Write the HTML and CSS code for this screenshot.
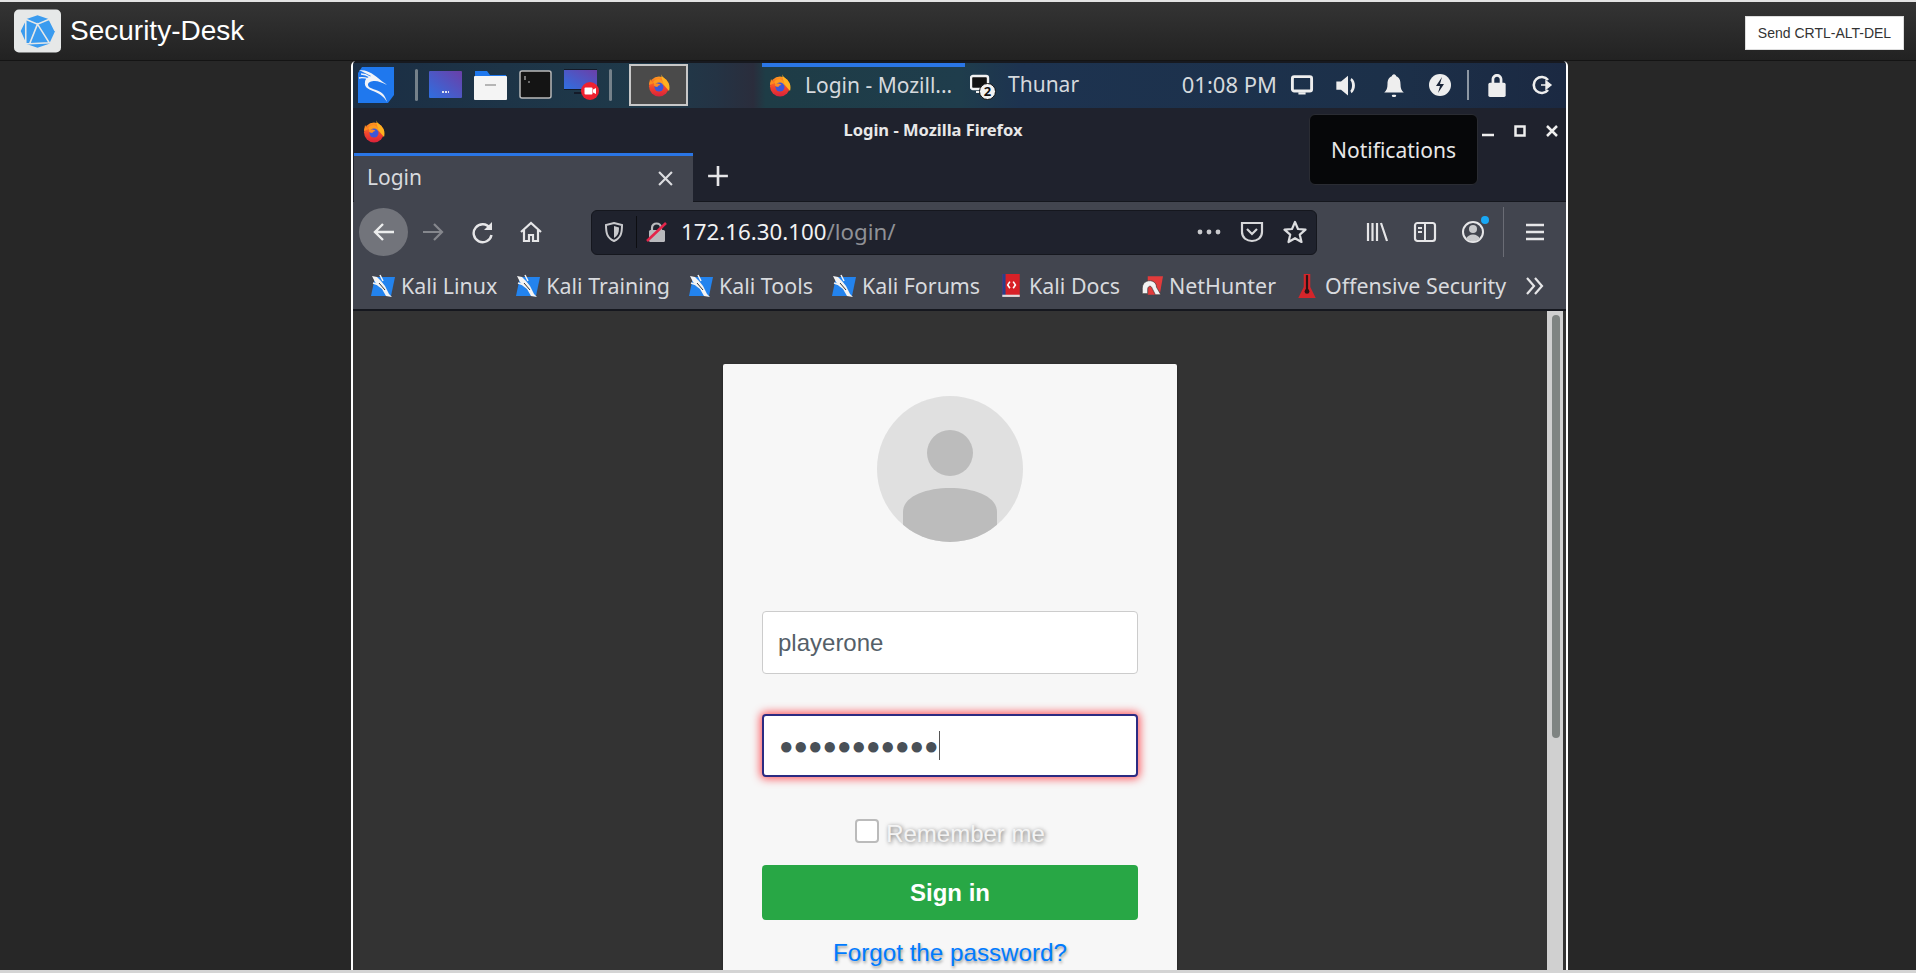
FILE: index.html
```html
<!DOCTYPE html>
<html lang="en">

<head>
    <meta charset="UTF-8">
    <title>Security-Desk</title>
    <link rel="stylesheet" href="styles.css">
</head>

<body>
    <svg class="defs" width="0" height="0">
        <defs>
            <linearGradient id="ffRing" x1="0" y1="0" x2="0" y2="1">
                <stop offset="0" stop-color="#ff9a1f"/>
                <stop offset="0.55" stop-color="#f2452d"/>
                <stop offset="1" stop-color="#d9213a"/>
            </linearGradient>
            <linearGradient id="screenFill" x1="0" y1="1" x2="1" y2="0">
                <stop offset="0" stop-color="#2f6fe0"/>
                <stop offset="1" stop-color="#6b3fa8"/>
            </linearGradient>
            <symbol id="firefox" viewBox="0 0 24 24">
                <circle cx="12" cy="13.5" r="10" fill="url(#ffRing)"/>
                <path d="M14 1c.5 3 5 4.500 7.500 9 1.500 3 1 6.500 .5 8l-6-7z" fill="#ffb21f"/>
                <path d="M3 6c0 2-1 3-1 6l5-2c-2-1-3-2-4-4z" fill="#ff8a1f"/>
                <path d="M6 9c2-3 6-4 8-2 2 1 3 3 2 6l-8-1z" fill="#ff9a1f"/>
                <circle cx="12" cy="14" r="4.500" fill="#3c56d8"/>
                <path d="M6.500 12c2-2 5-2 7 0-2 0-3 1-3 2-2 0-3-1-4-2z" fill="#ff8a1f"/>
            </symbol>
            <symbol id="kali-mark" viewBox="0 0 24 24">
                <path d="M4 3h20l-4 19H0z" fill="#2383ee"/>
                <path d="M1 2l5 1 4 4 4 5 4 8 3 3-6-1-4-7-4-3-3-4z" fill="#f4f4f4"/>
                <path d="M2 9l6 2M9 1l3 6" stroke="#f4f4f4" stroke-width="1.500"/>
                <path d="M8 9l6 7" stroke="#333" stroke-width="1"/>
            </symbol>
        </defs>
    </svg>

    <div class="page">
        <header class="topbar">
            <div class="brand">
                <svg class="brand-logo" viewBox="0 0 48 44">
                    <rect width="48" height="44" rx="5" fill="#e6e8e8"/>
                    <path d="M24 6l12 4 6 12-6 13-12 4-12-4-6-13 6-12z" fill="#3a9bef"/>
                    <path d="M12 10l12 5 12-5M24 15l-8 20 20-1-12-19zM6 22l6-12v25z M42 22l-6-12M16 35l-4 0" fill="none" stroke="#e6e8e8" stroke-width="1.600"/>
                </svg>
                <span class="brand-name">Security-Desk</span>
            </div>
            <button class="send-btn">Send CRTL-ALT-DEL</button>
        </header>

        <div class="stage">
            <div class="desktop">
                <div class="panel">
                    <svg class="kali-logo" viewBox="0 0 36 36">
                        <path d="M4 0h32v28l-6 8H0V6z" fill="#1f78ee"/>
                        <path d="M1 3c8 0 13 3 19 8 3 3 7 5 9 7-4-2-9-4-12-4-4 0-7 1-7 4 0 4 10 4 15 9 2 2 3 5 4 8-3-6-9-9-14-11-5-2-9-4-8-9 0-3 3-5 6-6C9 7 5 5 1 3z" fill="#f2f4f8"/>
                        <path d="M1 11c4-1 7 0 10 1M3 7c3 0 6 1 9 3" stroke="#f2f4f8" stroke-width="1.300" fill="none"/>
                    </svg>
                    <span class="panel-sep"></span>
                    <div class="launchers">
                        <svg class="launcher" viewBox="0 0 33 30"><rect width="33" height="27" y="1" rx="1" fill="url(#screenFill)"/><path d="M13 22h7" stroke="#dfe3f0" stroke-width="2" stroke-dasharray="2 1"/></svg>
                        <svg class="launcher" viewBox="0 0 33 30"><path d="M1 1h12l3 4h16v6H1z" fill="#1f78ee"/><rect x="0" y="6" width="33" height="24" rx="1" fill="#f4f4f4"/><path d="M11 15h11" stroke="#b5b5b5" stroke-width="2"/></svg>
                        <svg class="launcher" viewBox="0 0 33 30"><rect x="1" y="1" width="31" height="27" rx="2" fill="#141414" stroke="#b9b9b9" stroke-width="1.500"/><path d="M6 6v4M9 12h2" stroke="#bbb" stroke-width="1.200"/></svg>
                        <svg class="launcher launcher-rec" viewBox="0 0 36 32"><rect y="0" width="33" height="21" fill="#141a28"/><rect y="1" width="33" height="19" fill="url(#screenFill)"/><path d="M10 24h14" stroke="#141a28" stroke-width="2"/><circle cx="26" cy="22" r="9" fill="#ee2130"/><rect x="20.500" y="18.500" width="8" height="7" rx="1" fill="#fff"/><path d="M29 20.500l3-1.500v6l-3-1.500z" fill="#fff"/></svg>
                    </div>
                    <span class="panel-sep panel-sep-b"></span>
                    <div class="win-active"><svg class="icon-24"><use href="#firefox"/></svg></div>
                    <div class="task task-current">
                        <svg class="icon-24"><use href="#firefox"/></svg>
                        <span class="task-label">Login - Mozill...</span>
                    </div>
                    <div class="task task-thunar">
                        <span class="thunar-icon">
                            <svg class="icon-20" viewBox="0 0 20 20"><rect x="1" y="2" width="17" height="13" rx="2" fill="#111" stroke="#f0f0f0" stroke-width="2.400"/><path d="M6 18h8" stroke="#f0f0f0" stroke-width="2"/></svg>
                            <span class="thunar-count">2</span>
                        </span>
                        <span class="task-label">Thunar</span>
                    </div>
                    <div class="tray">
                        <span class="clock">01:08 PM</span>
                        <span class="tray-item"><svg class="icon-24" viewBox="0 0 20 20"><rect x="2" y="3" width="16" height="12" rx="1.500" fill="none" stroke="#eee" stroke-width="2.400"/><path d="M7 17h6" stroke="#eee" stroke-width="2"/></svg></span>
                        <span class="tray-item"><svg class="icon-28" viewBox="0 0 24 24"><path d="M2 9h4l6-5v17l-6-5H2z" fill="#eee"/><path d="M15 6c4 3 4 10 0 13l-1-2c2-2 2-7 0-9z" fill="#eee"/></svg></span>
                        <span class="tray-item"><svg class="icon-26" viewBox="0 0 24 24"><path d="M12 2c1 0 2 1 2 2 3 1 4 4 4 7 0 4 1 6 3 8H3c2-2 3-4 3-8 0-3 1-6 4-7 0-1 1-2 2-2z" fill="#eee"/><rect x="10" y="21" width="4" height="2" rx="1" fill="#eee"/></svg></span>
                        <span class="tray-item"><svg class="icon-24" viewBox="0 0 24 24"><circle cx="12" cy="12" r="11" fill="#eee"/><path d="M14 4l-6 9h4l-2 7 6-9h-4z" fill="#1c2638"/></svg></span>
                        <span class="tray-sep"></span>
                        <span class="tray-item"><svg class="icon-26" viewBox="0 0 24 24"><path d="M7 11V7c0-7 10-7 10 0v4h-2.500V7c0-3.500-5-3.500-5 0v4z" fill="#eee"/><rect x="4" y="10" width="16" height="13" rx="1.500" fill="#eee"/></svg></span>
                        <span class="tray-item"><svg class="icon-24" viewBox="0 0 24 24"><path d="M17 7a8 8 0 1 0 0 10" fill="none" stroke="#eee" stroke-width="2.600"/><path d="M10 12h8M15 8l5 4-5 4z" fill="#eee" stroke="#eee" stroke-width="1.400"/></svg></span>
                    </div>
                </div>

                <div class="titlebar">
                    <svg class="icon-24"><use href="#firefox"/></svg>
                    <span class="window-title">Login - Mozilla Firefox</span>
                    <div class="window-controls">
                        <span class="wc"><svg width="14" height="14" viewBox="0 0 14 14"><path d="M1 11h12" stroke="#eee" stroke-width="2.500"/></svg></span>
                        <span class="wc"><svg width="14" height="14" viewBox="0 0 14 14"><rect x="2.500" y="2.500" width="9" height="9" fill="none" stroke="#eee" stroke-width="2.500"/></svg></span>
                        <span class="wc"><svg width="14" height="14" viewBox="0 0 14 14"><path d="M2 2l10 10M12 2L2 12" stroke="#eee" stroke-width="2.500"/></svg></span>
                    </div>
                </div>

                <div class="tabstrip">
                    <div class="tab">
                        <span class="tab-label">Login</span>
                        <svg class="tab-close" viewBox="0 0 14 14"><path d="M1 1l12 12M13 1L1 13" stroke="#dcdde0" stroke-width="2"/></svg>
                    </div>
                    <svg class="tab-new" viewBox="0 0 20 20"><path d="M10 1v18M1 10h18" stroke="#e6e6e8" stroke-width="2.400"/></svg>
                </div>

                <div class="toolbar">
                    <span class="nav-btn nav-back"><svg class="icon-24" viewBox="0 0 24 24"><path d="M22 12H3M11 4l-8 8 8 8" fill="none" stroke="#eceded" stroke-width="2.400"/></svg></span>
                    <span class="nav-btn"><svg class="icon-24" viewBox="0 0 24 24"><path d="M2 12h19M13 4l8 8-8 8" fill="none" stroke="#85878d" stroke-width="2.200"/></svg></span>
                    <span class="nav-btn"><svg class="icon-24 reload-icon" viewBox="0 0 24 24"><path d="M19 8a9 9 0 1 0 1.500 7" fill="none" stroke="#e6e6e8" stroke-width="2.400"/><path d="M21 2v8h-8z" fill="#e6e6e8"/></svg></span>
                    <span class="nav-btn"><svg class="icon-24" viewBox="0 0 24 24"><path d="M2 12L12 3l10 9M5 10v11h5v-6h4v6h5V10" fill="none" stroke="#e6e6e8" stroke-width="2.200"/></svg></span>
                    <div class="urlbar">
                        <span class="url-shield"><svg class="icon-20" viewBox="0 0 20 20"><path d="M10 1l8 2c0 8-1 13-8 16C3 16 2 11 2 3z" fill="none" stroke="#c8c9cc" stroke-width="2"/><path d="M10 4l5 1.500c0 5-1 8-5 10.500z" fill="#c8c9cc"/></svg></span>
                        <span class="url-sep"></span>
                        <span class="url-lock"><svg class="icon-22" viewBox="0 0 22 22"><path d="M6 10V7c0-6 9-6 9 0v3" fill="none" stroke="#b9babd" stroke-width="2.200"/><rect x="3" y="9" width="16" height="12" rx="1.500" fill="#b9babd"/><path d="M1 20L20 2" stroke="#e4254a" stroke-width="2.600"/></svg></span>
                        <span class="url-text"><span class="url-host">172.16.30.100</span>/login/</span>
                        <div class="url-actions">
                            <span class="url-action"><svg width="24" height="6" viewBox="0 0 24 6"><circle cx="3" cy="3" r="2.400" fill="#c8c9cc"/><circle cx="12" cy="3" r="2.400" fill="#c8c9cc"/><circle cx="21" cy="3" r="2.400" fill="#c8c9cc"/></svg></span>
                            <span class="url-action"><svg class="icon-24" viewBox="0 0 24 24"><path d="M2 3h20v9c0 12-20 12-20 0z" fill="none" stroke="#d6d7d9" stroke-width="2.200"/><path d="M7 9l5 5 5-5" fill="none" stroke="#d6d7d9" stroke-width="2.200"/></svg></span>
                            <span class="url-action"><svg class="icon-24" viewBox="0 0 24 24"><path d="M12 2l3 7 7.500 .7-5.700 5 1.700 7.300-6.500-3.800L5.500 22l1.700-7.300-5.700-5L9 9z" fill="none" stroke="#dcdde0" stroke-width="2.200" stroke-linejoin="round"/></svg></span>
                        </div>
                    </div>
                    <div class="tools">
                        <span class="nav-tool"><svg class="icon-24" viewBox="0 0 24 24"><path d="M3 3v18M7.500 3v18M12 3v18M16 3l6 18" stroke="#e6e6e8" stroke-width="2.200"/></svg></span>
                        <span class="nav-tool"><svg class="icon-24" viewBox="0 0 24 24"><rect x="2" y="3" width="20" height="18" rx="2.500" fill="none" stroke="#e6e6e8" stroke-width="2.200"/><path d="M12 3v18M5 8h4M5 12h4" stroke="#e6e6e8" stroke-width="2"/></svg></span>
                        <span class="nav-tool account">
                            <svg class="icon-24" viewBox="0 0 24 24"><circle cx="12" cy="12" r="10" fill="none" stroke="#e6e6e8" stroke-width="2"/><circle cx="12" cy="9" r="4" fill="#c8c9cc"/><path d="M5 19c2-6 12-6 14 0-4 3-10 3-14 0z" fill="#c8c9cc"/></svg>
                            <span class="account-dot"></span>
                        </span>
                        <span class="tool-sep"></span>
                        <span class="nav-menu"><svg class="icon-24" viewBox="0 0 24 24"><path d="M3 5h18M3 12h18M3 19h18" stroke="#e6e6e8" stroke-width="2.400"/></svg></span>
                    </div>
                </div>

                <div class="bookmarks">
                    <span class="bm"><svg class="icon-24"><use href="#kali-mark"/></svg>Kali Linux</span>
                    <span class="bm"><svg class="icon-24"><use href="#kali-mark"/></svg>Kali Training</span>
                    <span class="bm"><svg class="icon-24"><use href="#kali-mark"/></svg>Kali Tools</span>
                    <span class="bm"><svg class="icon-24"><use href="#kali-mark"/></svg>Kali Forums</span>
                    <span class="bm"><svg class="icon-24" viewBox="0 0 22 22"><rect x="3" y="0" width="16" height="21" fill="#d82027"/><rect x="3" y="0" width="3" height="21" fill="#27408b"/><rect x="3" y="19" width="16" height="2" fill="#ddd"/><path d="M10 7l-2 3 2 3M13 7l2 3-2 3" fill="none" stroke="#fff" stroke-width="1.500"/></svg>Kali Docs</span>
                    <span class="bm"><svg class="icon-24" viewBox="0 0 22 22"><path d="M8 2h14l-3 17H8z" fill="#e23b3b"/><path d="M3 18V13c0-9 13-9 13-1l4 7h-5l-3-6c-1-3-4-2-4 1v4z" fill="#f2f2f2" stroke="#333" stroke-width=".6"/></svg>NetHunter</span>
                    <span class="bm"><svg class="icon-24" viewBox="0 0 22 22"><path d="M8 0h6v12l5 10H3l5-10z" fill="#d4252a"/><path d="M11 1v14" stroke="#2a1414" stroke-width="2"/><circle cx="11" cy="16" r="2.200" fill="#2a1414"/></svg>Offensive Security</span>
                    <svg class="bm-more" viewBox="0 0 20 20"><path d="M2 2l7 8-7 8M10 2l7 8-7 8" fill="none" stroke="#e6e6e8" stroke-width="2.200"/></svg>
                </div>

                <div class="viewport">
                    <main class="content">
                        <div class="login-card">
                            <svg class="avatar" viewBox="0 0 146 146">
                                <defs><clipPath id="avatarClip"><circle cx="73" cy="73" r="73"/></clipPath></defs>
                                <circle cx="73" cy="73" r="73" fill="#e0e0e0"/>
                                <circle cx="73" cy="57" r="23" fill="#bcbcbc"/>
                                <g clip-path="url(#avatarClip)">
                                    <path d="M26 135V116c0-32 94-32 94 0V135L110 148H36z" fill="#bcbcbc"/>
                                </g>
                            </svg>
                            <div class="field field-user">playerone</div>
                            <div class="field field-pass"><span class="pass-dots">●●●●●●●●●●●</span><span class="caret"></span></div>
                            <label class="remember">
                                <input class="remember-box" type="checkbox">
                                <span class="remember-text">Remember me</span>
                            </label>
                            <button class="signin">Sign in</button>
                            <a class="forgot" href="#">Forgot the password?</a>
                        </div>
                    </main>
                    <div class="scrolltrack"><span class="scrollthumb"></span></div>
                </div>

                <div class="tooltip">Notifications</div>
            </div>
        </div>

        <div class="bottom-strip"></div>
    </div>
</body>

</html>
```
FILE: styles.css
```css
* {
    margin: 0;
    padding: 0;
    box-sizing: border-box;
}

html,
body {
    height: 100%;
    overflow: hidden;
}

body {
    background-color: #272727;
    font-family: "Liberation Sans", Arial, sans-serif;
}

.defs {
    position: absolute;
}

.page {
    height: 973px;
    display: flex;
    flex-direction: column;
}

svg {
    display: block;
    flex: none;
}

.icon-20 {
    width: 20px;
    height: 20px;
}

.icon-22 {
    width: 22px;
    height: 22px;
}

.icon-24 {
    width: 24px;
    height: 24px;
}

.icon-26 {
    width: 26px;
    height: 26px;
}

.icon-28 {
    width: 28px;
    height: 28px;
}

/* top bar of the site */
.topbar {
    height: 61px;
    flex: none;
    display: flex;
    align-items: center;
    justify-content: space-between;
    padding: 0 12px 0 14px;
    background: linear-gradient(#343434, #222222);
    border-top: 2px solid #e4e4e4;
    border-bottom: 1px solid #141414;
}

.brand {
    display: flex;
    align-items: center;
    gap: 9px;
}

.brand-logo {
    width: 47px;
    height: 44px;
}

.brand-name {
    color: #ffffff;
    font-size: 28px;
}

.send-btn {
    width: 159px;
    height: 34px;
    margin-top: 3px;
    background-color: #ffffff;
    border: 1px solid #dddddd;
    color: #333333;
    font-family: "Liberation Sans", Arial, sans-serif;
    font-size: 14px;
}

/* remote desktop */
.stage {
    flex: 1;
    min-height: 0;
    padding-left: 351px;
}

.desktop {
    position: relative;
    width: 1217px;
    height: 909px;
    display: flex;
    flex-direction: column;
    overflow: hidden;
    background-color: #1f222d;
    border-left: 2px solid #ffffff;
    border-right: 2px solid #ffffff;
    border-radius: 5px 5px 0 0;
    font-family: "Noto Sans", sans-serif;
}

.panel {
    height: 47px;
    flex: none;
    display: flex;
    align-items: center;
    padding-top: 1px;
    color: #d5d9dd;
    font-size: 21px;
    background: linear-gradient(90deg, #1b2e44 0, #1f3a4a 25%, #243344 30%, #2a2d3c 33%, #1e3c46 34%, #1f3d4c 50%, #1d3350 55%, #1c3049 85%, #1b2942 100%);
    box-shadow: inset 0 2px 0 #17191f;
}

.kali-logo {
    width: 36px;
    height: 36px;
    margin-left: 5px;
}

.panel-sep {
    width: 3px;
    height: 32px;
    margin-left: 21px;
    background-color: #75818a;
    border-radius: 2px;
}

.panel-sep-b {
    margin-left: 9px;
}

.launchers {
    display: flex;
    align-items: center;
    gap: 12px;
    margin-left: 11px;
}

.launcher {
    width: 33px;
    height: 30px;
}

.launcher-rec {
    width: 36px;
    height: 32px;
}

.win-active {
    width: 59px;
    height: 42px;
    margin-left: 17px;
    display: flex;
    align-items: center;
    justify-content: center;
    background-color: #4a4a4a;
    border: 2px solid #c8c8c8;
}

.task {
    height: 45px;
    display: flex;
    align-items: center;
    padding-bottom: 5px;
}

.task-current {
    width: 203px;
    margin-left: 74px;
    gap: 13px;
    padding-left: 6px;
    border-top: 4px solid #2a76e6;
}

.task-thunar {
    margin-left: 5px;
    gap: 18px;
    padding-bottom: 2px;
}

.thunar-icon {
    position: relative;
    display: block;
}

.thunar-count {
    position: absolute;
    right: -6px;
    bottom: -6px;
    width: 17px;
    height: 17px;
    border-radius: 50%;
    background-color: #f2f2f2;
    border: 1px solid #111111;
    color: #111111;
    font-size: 13px;
    font-weight: 700;
    line-height: 15px;
    text-align: center;
}

.tray {
    margin-left: auto;
    display: flex;
    align-items: center;
}

.clock {
    margin-right: 2px;
    padding-bottom: 3px;
    font-size: 22px;
}

.tray-item {
    width: 46px;
    display: flex;
    justify-content: center;
}

.tray-sep {
    width: 2px;
    height: 30px;
    margin: 0 5px 0 4px;
    background-color: #8d97a3;
}

.titlebar {
    height: 45px;
    flex: none;
    display: flex;
    align-items: center;
    padding-left: 9px;
    background-color: #1f222d;
}

.window-title {
    flex: 1;
    padding: 0 0 2px 8px;
    color: #e8e8e8;
    font-size: 16.5px;
    font-weight: 700;
    text-align: center;
}

.window-controls {
    width: 96px;
    display: flex;
    margin-right: -2px;
}

.wc {
    width: 32px;
    display: flex;
    justify-content: center;
}

.tabstrip {
    height: 49px;
    flex: none;
    display: flex;
    align-items: center;
    padding-left: 1px;
    background-color: #1f222d;
    border-bottom: 1px solid #15171e;
}

.tab {
    width: 339px;
    height: 49px;
    display: flex;
    align-items: center;
    justify-content: space-between;
    padding: 0 20px 0 13px;
    background-color: #42454f;
    border-top: 3px solid #2a76e6;
    color: #d8dade;
    font-size: 21px;
}

.tab-label {
    padding-bottom: 4px;
}

.tab-close {
    width: 15px;
    height: 15px;
}

.tab-new {
    width: 22px;
    height: 22px;
    margin: 0 0 2px 14px;
}

.toolbar {
    height: 60px;
    flex: none;
    display: flex;
    align-items: center;
    padding-left: 6px;
    background-color: #42454f;
}

.nav-btn {
    width: 49px;
    height: 48px;
    flex: none;
    display: flex;
    align-items: center;
    justify-content: center;
}

.reload-icon {
    margin-left: 2px;
}

.nav-back {
    background-color: #72747b;
    border-radius: 50%;
}

.urlbar {
    width: 726px;
    height: 45px;
    flex: none;
    margin-left: 36px;
    display: flex;
    align-items: center;
    padding-left: 11px;
    background-color: #1f222d;
    border: 1px solid #15171e;
    border-radius: 6px;
    font-size: 22.3px;
    color: #8f9196;
}

.url-shield {
    width: 22px;
    display: flex;
    justify-content: center;
}

.url-sep {
    width: 1px;
    height: 32px;
    margin-left: 11px;
    background-color: #0d0e12;
}

.url-lock {
    margin-left: 9px;
}

.url-text {
    margin-left: 13px;
    padding-bottom: 2px;
}

.url-host {
    color: #f2f2f3;
}

.url-actions {
    margin-left: auto;
    display: flex;
    align-items: center;
}

.url-action {
    width: 43px;
    display: flex;
    justify-content: center;
}

.tools {
    display: flex;
    align-items: center;
    margin-left: 36px;
}

.nav-tool {
    position: relative;
    width: 48px;
    display: flex;
    justify-content: center;
}

.account-dot {
    position: absolute;
    top: -4px;
    right: 8px;
    width: 8px;
    height: 8px;
    border-radius: 50%;
    background-color: #18a8f5;
}

.tool-sep {
    width: 1px;
    height: 50px;
    margin-left: 6px;
    background-color: #6a6c75;
}

.nav-menu {
    width: 62px;
    display: flex;
    justify-content: center;
}

.bookmarks {
    height: 49px;
    flex: none;
    display: flex;
    align-items: center;
    gap: 19px;
    padding: 0 21px 0 18px;
    background-color: #42454f;
    border-bottom: 2px solid #15171e;
    color: #d8dade;
    font-size: 21.4px;
}

.bm {
    flex: none;
    display: flex;
    align-items: center;
    gap: 6px;
    white-space: nowrap;
}

.bm-more {
    width: 20px;
    height: 20px;
    margin-left: auto;
}

.viewport {
    flex: 1;
    min-height: 0;
    display: flex;
    background-color: #333333;
    font-family: "Liberation Sans", Arial, sans-serif;
}

.content {
    flex: 1;
    display: flex;
    justify-content: center;
    padding-top: 53px;
    overflow: hidden;
}

.login-card {
    width: 454px;
    height: 800px;
    display: flex;
    flex-direction: column;
    align-items: center;
    padding: 32px 39px 0;
    background-color: #f7f7f7;
    border-radius: 2px;
    box-shadow: 0 1px 3px rgba(0, 0, 0, 0.4);
}

.avatar {
    width: 146px;
    height: 146px;
    margin-bottom: 69px;
}

.field {
    width: 376px;
    height: 63px;
    flex: none;
    display: flex;
    align-items: center;
    padding: 0 15px;
    background-color: #ffffff;
    border: 1px solid #cccccc;
    border-radius: 4px;
    color: #555f69;
    font-size: 24px;
}

.field-pass {
    margin-top: 40px;
    border: 2px solid #2b2b82;
    box-shadow: 0 0 9px 2px rgba(255, 40, 50, 0.75);
}

.pass-dots {
    font-size: 24px;
    color: #495057;
    font-family: "Liberation Sans", "DejaVu Sans", sans-serif;
}

.caret {
    width: 1px;
    height: 29px;
    margin-left: 1px;
    background-color: #555555;
}

.remember {
    margin-top: 42px;
    height: 23px;
    display: flex;
    align-items: center;
    gap: 7px;
}

.remember-box {
    appearance: none;
    width: 24px;
    height: 24px;
    background-color: #ffffff;
    border: 2px solid #bbbbbb;
    border-radius: 4px;
}

.remember-text {
    margin-top: 6px;
    color: #f4f4f4;
    font-size: 24px;
    text-shadow: 1px 1px 4px #666666;
}

.signin {
    width: 376px;
    height: 55px;
    flex: none;
    margin-top: 23px;
    background-color: #28a745;
    border: none;
    border-radius: 4px;
    color: #ffffff;
    font-family: "Liberation Sans", Arial, sans-serif;
    font-size: 24px;
    font-weight: 700;
}

.forgot {
    margin-top: 19px;
    color: #007bff;
    font-size: 24.2px;
    text-decoration: none;
    text-shadow: 1px 2px 3px #999999;
}

.scrolltrack {
    width: 16px;
    margin-right: 3px;
    padding: 4px 3px 0 5px;
    background-color: #d0d0d0;
}

.scrollthumb {
    display: block;
    height: 423px;
    background-color: #7f8482;
    border-radius: 4px;
}

.tooltip {
    position: absolute;
    top: 53px;
    left: 956px;
    width: 169px;
    height: 71px;
    display: flex;
    align-items: center;
    justify-content: center;
    background-color: #060709;
    border: 1px solid #2a2c33;
    border-radius: 6px;
    color: #e8e8e8;
    font-size: 21px;
}

.bottom-strip {
    height: 3px;
    flex: none;
    background-color: #d4d4d4;
}
```
